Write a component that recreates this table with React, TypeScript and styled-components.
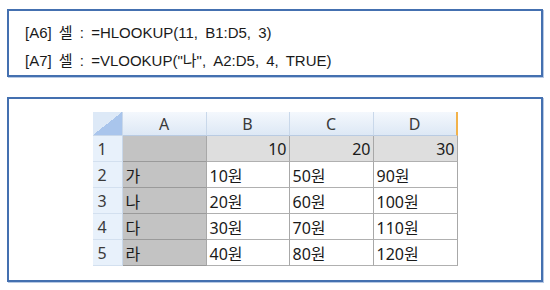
import React from "react";
import styled, { createGlobalStyle } from "styled-components";

const Global = createGlobalStyle`
  html, body { margin: 0; padding: 0; background: #ffffff; }
  body { width: 550px; height: 290px; overflow: hidden; }
`;

const Page = styled.div`
  display: flex;
  flex-direction: column;
  gap: 20px;
  padding: 9px 7px 0 7px;
  width: 536px;
`;

const Frame = styled.div<{ $h: number }>`
  box-sizing: border-box;
  width: 536px;
  height: ${(p) => p.$h}px;
  border: 2px solid #4470b0;
  box-shadow: 1px 1px 0 #b7c9e4;
  background: #fff;
`;

const Formulas = styled.div`
  padding: 8px 0 0 16px;
  font-family: "Liberation Sans", "Noto Sans CJK KR", sans-serif;
  font-size: 15px;
  word-spacing: 3px;
  line-height: 28px;
  color: #1a1a1a;
  white-space: pre;
`;

const TableWrap = styled.div`
  display: flex;
  justify-content: center;
  padding-top: 13px;
`;

const Grid = styled.div`
  display: grid;
  grid-template-columns: 30px 84px 83px 84px 84px;
  grid-template-rows: 24px repeat(5, 26px);
  font-family: "Noto Sans", "Noto Sans CJK KR", sans-serif;
  font-size: 16px;
  color: #1a1a1a;
`;

const Corner = styled.div`
  position: relative;
  box-sizing: border-box;
  background: #dde9f7;
  border-right: 1px solid #c9d8ea;
  border-bottom: 1px solid #c9d8ea;
  overflow: hidden;
  &::after {
    content: "";
    position: absolute;
    inset: 0;
    background: linear-gradient(to top left, #a9c5ec 50%, transparent 50%);
  }
`;

const ColHead = styled.div<{ $last?: boolean }>`
  box-sizing: border-box;
  display: flex;
  align-items: center;
  justify-content: center;
  background: linear-gradient(#f4f8fd, #dde8f5);
  border-right: ${(p) => (p.$last ? "2px solid #f2b24a" : "1px solid #c9d8ea")};
  border-bottom: 1px solid #b9cbe2;
  color: #3a3a3a;
`;

const RowHead = styled.div`
  box-sizing: border-box;
  display: flex;
  align-items: center;
  padding-left: 5px;
  background: #e8f1fb;
  border-right: 1px solid #c9d8ea;
  border-bottom: 1px solid #d3e0ef;
  color: #3a3a3a;
`;

const Cell = styled.div<{ $kind: "key" | "num" | "data" }>`
  box-sizing: border-box;
  display: flex;
  align-items: center;
  justify-content: ${(p) => (p.$kind === "num" ? "flex-end" : "flex-start")};
  padding: ${(p) => (p.$kind === "num" ? "0 2px 0 0" : "0 0 0 3px")};
  background: ${(p) =>
    p.$kind === "key" ? "#c3c3c3" : p.$kind === "num" ? "#dedede" : "#ffffff"};
  border-right: 1px solid #a8a8a8;
  border-bottom: 1px solid ${(p) => (p.$kind === "key" ? "#9a9a9a" : "#b0b0b0")};
`;

const keys = ["가", "나", "다", "라"];
const header = [10, 20, 30];
const data = [
  ["10원", "50원", "90원"],
  ["20원", "60원", "100원"],
  ["30원", "70원", "110원"],
  ["40원", "80원", "120원"],
];

export default function App() {
  return (
    <>
      <Global />
      <Page>
        <Frame $h={68}>
          <Formulas>
            <div>[A6] 셀 : =HLOOKUP(11, B1:D5, 3)</div>
            <div>[A7] 셀 : =VLOOKUP("나", A2:D5, 4, TRUE)</div>
          </Formulas>
        </Frame>
        <Frame $h={185}>
          <TableWrap>
            <Grid>
              <Corner />
              {["A", "B", "C", "D"].map((c, i) => (
                <ColHead key={c} $last={i === 3}>
                  {c}
                </ColHead>
              ))}
              <RowHead>1</RowHead>
              <Cell $kind="key" />
              {header.map((n) => (
                <Cell key={n} $kind="num">
                  {n}
                </Cell>
              ))}
              {data.map((row, r) => (
                <React.Fragment key={r}>
                  <RowHead>{r + 2}</RowHead>
                  <Cell $kind="key">{keys[r]}</Cell>
                  {row.map((v) => (
                    <Cell key={v} $kind="data">
                      {v}
                    </Cell>
                  ))}
                </React.Fragment>
              ))}
            </Grid>
          </TableWrap>
        </Frame>
      </Page>
    </>
  );
}
